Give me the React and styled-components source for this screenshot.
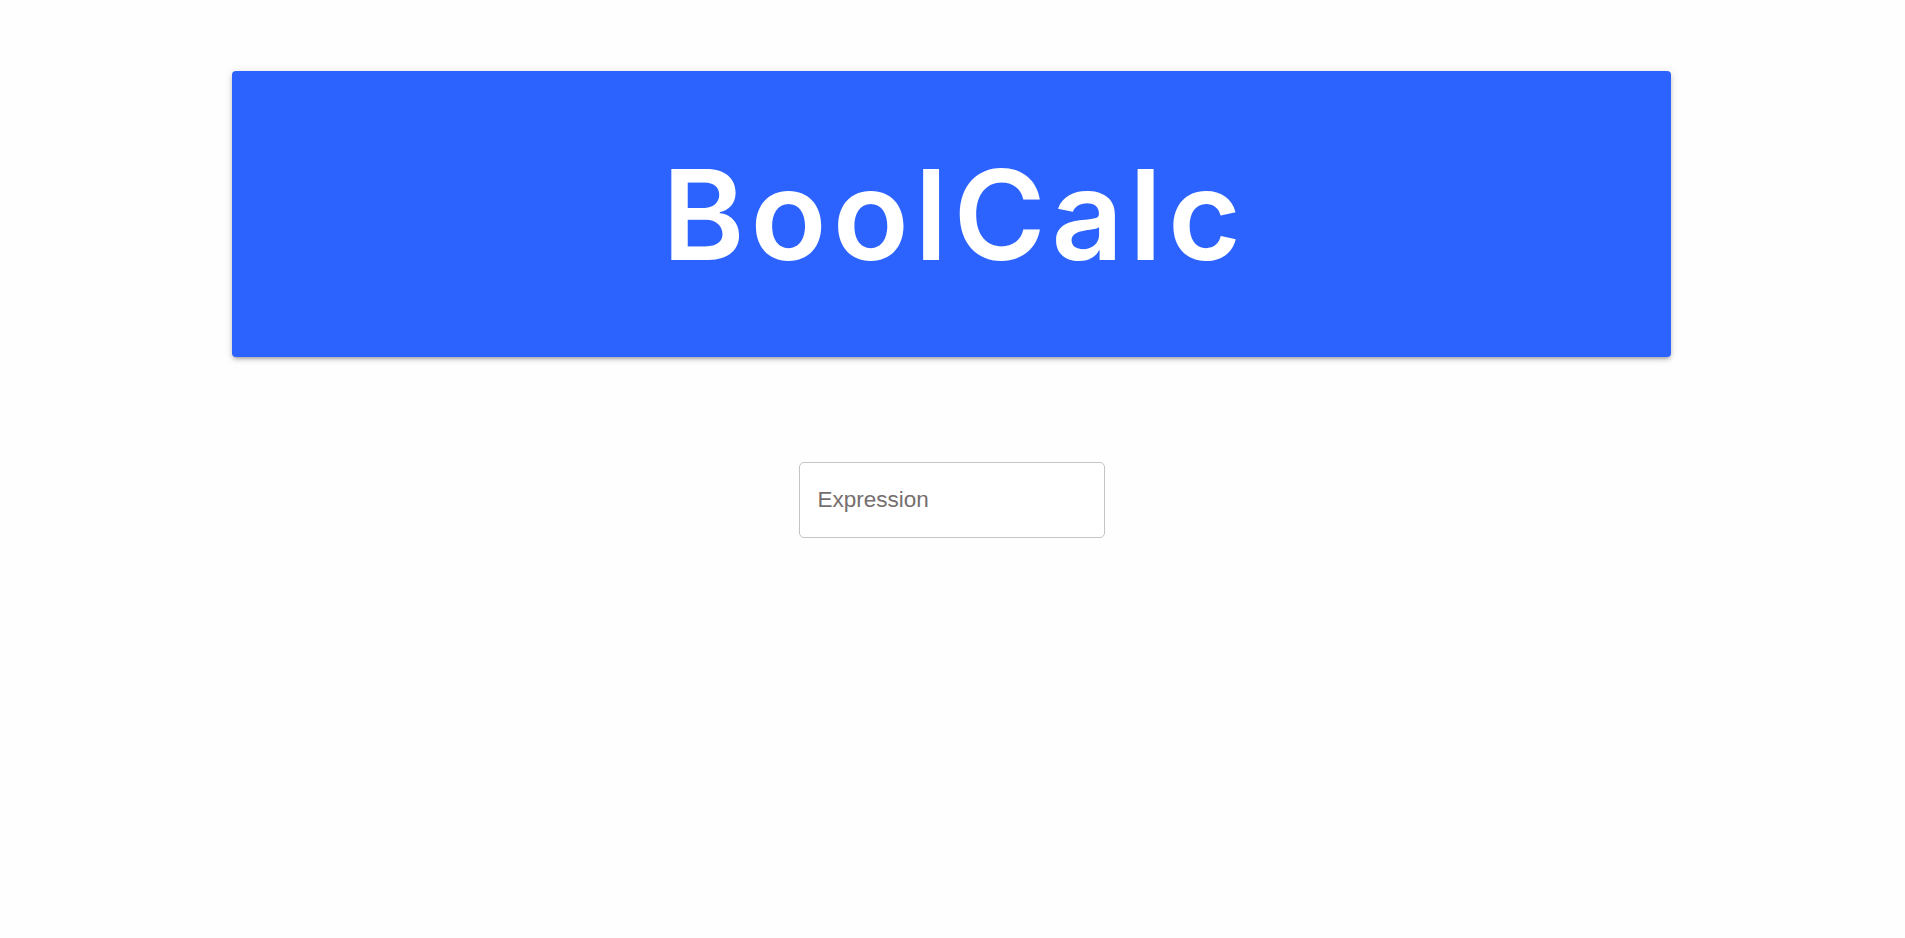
import React from "react";
import styled, { createGlobalStyle } from "styled-components";

const GlobalStyle = createGlobalStyle`
  body {
    margin: 0;
    background: #fefefe;
    font-family: "Liberation Sans", Arial, sans-serif;
  }
`;

export default function App() {
  return (
    <Page>
      <GlobalStyle />
      <Header>
        <Title>BoolCalc</Title>
      </Header>
      <Field type="text" placeholder="Expression" />
    </Page>
  );
}

const Page = styled.div`
  display: flex;
  flex-direction: column;
  align-items: center;
  padding-top: 71px;
`;

const Header = styled.div`
  width: 1439px;
  height: 286px;
  background-color: #2c63ff;
  border-radius: 4px;
  box-shadow: 0px 3px 3px -2px rgba(0, 0, 0, 0.2), 0px 3px 4px 0px rgba(0, 0, 0, 0.14), 0px 1px 8px 0px rgba(0, 0, 0, 0.12);
  display: flex;
  align-items: center;
  justify-content: center;
  margin-right: 2px;
`;

const Title = styled.h1`
  margin: 0;
  color: #ffffff;
  font-family: Inter, "Noto Sans", sans-serif;
  font-weight: 560;
  font-size: 125px;
  letter-spacing: 6px;
  line-height: 1;
  padding-left: 6px;
`;

const Field = styled.input`
  box-sizing: border-box;
  margin-top: 105px;
  margin-right: 2px;
  width: 306px;
  height: 76px;
  padding: 0 18px;
  border: 1px solid #c4c4c4;
  border-radius: 5px;
  font-family: "Liberation Sans", Arial, sans-serif;
  font-size: 22.5px;
  color: #333;
  outline: none;
  background: #fff;

  &::placeholder {
    color: #766e6e;
  }
`;
